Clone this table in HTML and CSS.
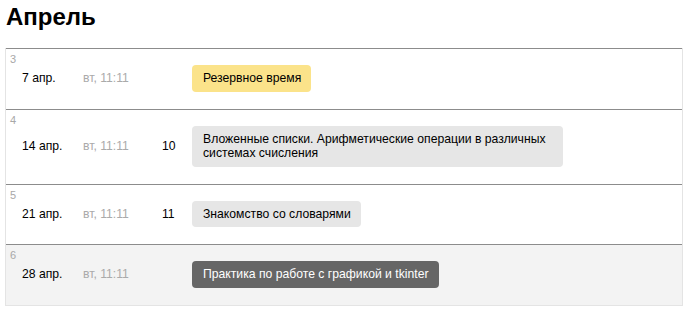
FILE: index.html
```html
<!DOCTYPE html>
<html lang="ru">
<head>
    <meta charset="UTF-8">
    <meta name="viewport" content="width=device-width, initial-scale=1.0">
    <title>Расписание</title>
    <link rel="stylesheet" href="styles.css">
</head>
<body>
    <!-- Month title -->
    <h1 class="month-title">Апрель</h1>

    <!-- Lessons of the month -->
    <div class="lessons">
        <div class="lesson">
            <div class="lesson-num">3</div>
            <div class="lesson-row">
                <span class="lesson-date">7 апр.</span>
                <span class="lesson-time">вт, 11:11</span>
                <span class="lesson-topic"></span>
                <span class="lesson-tag tag-reserve">Резервное время</span>
            </div>
        </div>
        <div class="lesson">
            <div class="lesson-num">4</div>
            <div class="lesson-row">
                <span class="lesson-date">14 апр.</span>
                <span class="lesson-time">вт, 11:11</span>
                <span class="lesson-topic">10</span>
                <span class="lesson-tag">Вложенные списки. Арифметические операции в различных системах счисления</span>
            </div>
        </div>
        <div class="lesson">
            <div class="lesson-num">5</div>
            <div class="lesson-row">
                <span class="lesson-date">21 апр.</span>
                <span class="lesson-time">вт, 11:11</span>
                <span class="lesson-topic">11</span>
                <span class="lesson-tag">Знакомство со словарями</span>
            </div>
        </div>
        <div class="lesson lesson-current">
            <div class="lesson-num">6</div>
            <div class="lesson-row">
                <span class="lesson-date">28 апр.</span>
                <span class="lesson-time">вт, 11:11</span>
                <span class="lesson-topic"></span>
                <span class="lesson-tag tag-practice">Практика по работе с графикой и tkinter</span>
            </div>
        </div>
    </div>
</body>
</html>
```

FILE: styles.css
```css
/* Schedule page */
body {
    font-family: "Liberation Sans", Arial, sans-serif;
    color: #000;
    background-color: #fff;
    margin: 0 5px;
}

.month-title {
    font-size: 24px;
    font-weight: bold;
    line-height: 30px;
    margin: 2px 0 16px 1px;
}

/* Lessons list */
.lessons {
    width: 676px;
    border-left: 1px solid #e4e4e4;
    border-right: 1px solid #e4e4e4;
    border-bottom: 1px solid #e4e4e4;
}

.lesson {
    border-top: 1px solid #8c8c8c;
    padding: 4px 0 17px 0;
}

.lesson-current {
    background-color: #f3f3f3;
}

.lesson-num {
    font-size: 11px;
    line-height: 12px;
    color: #a8a8a8;
    margin-left: 4px;
}

.lesson-row {
    display: flex;
    align-items: center;
    font-size: 12.2px;
}

.lesson-date {
    width: 61px;
    margin-left: 16px;
}

.lesson-time {
    width: 79px;
    color: #aaa;
}

.lesson-topic {
    width: 30px;
}

.lesson-tag {
    max-width: 350px;
    padding: 6px 10px 6px 11px;
    line-height: 14.5px;
    border-radius: 4px;
    background-color: #e6e6e6;
}

.tag-reserve {
    background-color: #fbe38a;
}

.tag-practice {
    background-color: #666;
    color: #fff;
}
```
